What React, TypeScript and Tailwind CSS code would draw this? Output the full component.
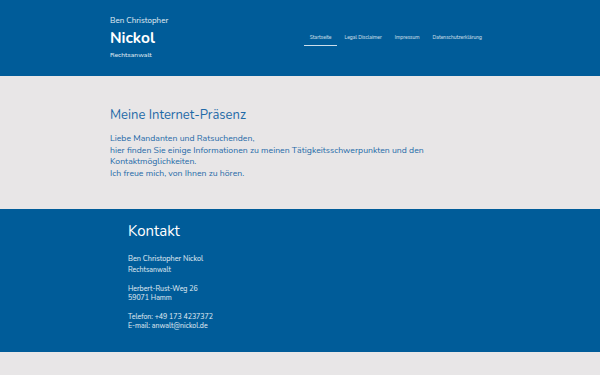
import React from 'react';

const font = { fontFamily: '"Nunito", "Lato", "Noto Sans", sans-serif' };

const navItems = ['Startseite', 'Legal Disclaimer', 'Impressum', 'Datenschutzerklärung'];

export default function App() {
    return (
        <div className="min-h-[375px] bg-[#e8e6e7] text-white" style={font}>
            {/* Header */}
            <header className="h-[76px] bg-[#005c99]">
                <div className="flex items-start pl-[110px] pr-[112px] pt-[14px]">
                    <div className="flex flex-col">
                        <span className="text-[8px] leading-[14px] text-white/90">Ben Christopher</span>
                        <span className="text-[15.5px] leading-[20px] font-bold">Nickol</span>
                        <span className="text-[6.8px] leading-[12px] mt-[1px] text-white/90">Rechtsanwalt</span>
                    </div>
                    <nav className="ml-auto flex items-start gap-[1px] pt-[20px] text-[5px] text-white/80">
                        {navItems.map((item, i) => (
                            <a key={item} className={i === 0 ? 'px-[6px] pb-[3px] border-b border-white/80' : 'px-[6px] pb-[3px]'}>
                                {item}
                            </a>
                        ))}
                    </nav>
                </div>
            </header>

            {/* Main */}
            <main className="h-[133px] px-[110px] pt-[31px] text-[#1f6aa8]">
                <h1 className="text-[13px] leading-[16px]">Meine Internet-Präsenz</h1>
                <p className="mt-[10px] text-[8.7px] leading-[11.5px]">
                    Liebe Mandanten und Ratsuchenden,<br />
                    hier finden Sie einige Informationen zu meinen Tätigkeitsschwerpunkten und den<br />
                    Kontaktmöglichkeiten.<br />
                    Ich freue mich, von Ihnen zu hören.
                </p>
            </main>

            {/* Footer */}
            <footer className="h-[143px] bg-[#005c99] px-[128px] pt-[13px]">
                <h2 className="text-[15px] leading-[18px]">Kontakt</h2>
                <div className="mt-[15px] text-[7px] leading-[9.5px] text-white/90">
                    <p className="text-[7.3px]">Ben Christopher Nickol</p>
                    <p>Rechtsanwalt</p>
                    <p className="mt-[9.5px]">Herbert-Rust-Weg 26</p>
                    <p>59071 Hamm</p>
                    <p className="mt-[9px]">Telefon: +49 173 4237372</p>
                    <p>E-mail: anwalt@nickol.de</p>
                </div>
            </footer>
        </div>
    );
}
